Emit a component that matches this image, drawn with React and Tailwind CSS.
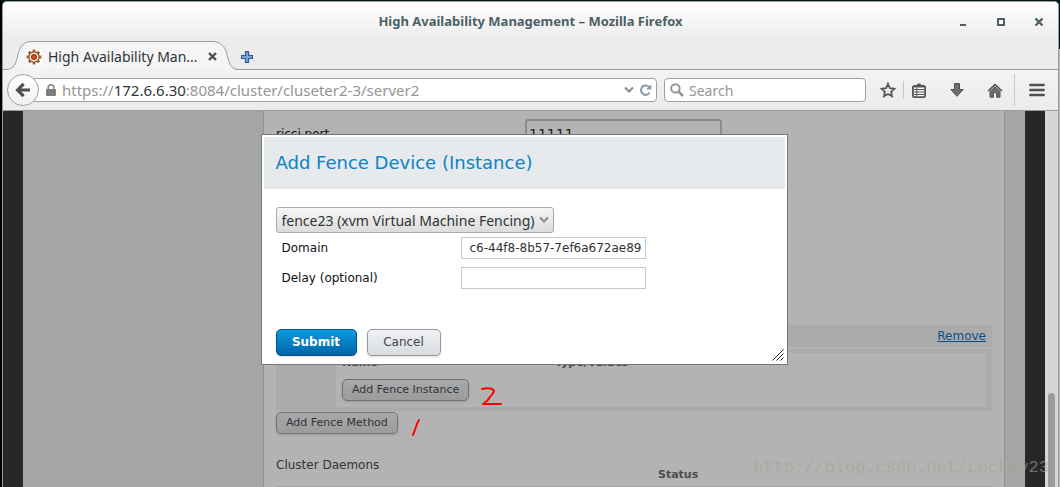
import { useState } from "react"

const DEVICES = ["fence23 (xvm Virtual Machine Fencing)"]

function TitleBar() {
  return (
    <div className="grid h-[39px] grid-cols-[1fr_auto_1fr] items-center">
      <span />
      <h1 className="text-[13px] font-bold text-[#4d5f66]">
        High Availability Management – Mozilla Firefox
      </h1>
      <div className="flex justify-end text-[#4d5f66]">
        <button aria-label="Minimize" className="flex h-6 w-[38px] items-center justify-center">
          <svg width="10" height="10" viewBox="0 0 10 10" fill="currentColor">
            <path d="M2 7h6v2H2z" />
          </svg>
        </button>
        <button aria-label="Maximize" className="flex h-6 w-[38px] items-center justify-center">
          <svg width="10" height="10" viewBox="0 0 10 10" fill="none" stroke="currentColor" strokeWidth="2">
            <path d="M2 2h6v6H2z" />
          </svg>
        </button>
        <button aria-label="Close" className="flex h-6 w-[38px] items-center justify-center">
          <svg width="10" height="10" viewBox="0 0 10 10" fill="none" stroke="currentColor" strokeWidth="2.4">
            <path d="M1.5 1.5l7 7M8.5 1.5l-7 7" />
          </svg>
        </button>
      </div>
    </div>
  )
}

function GearIcon() {
  return (
    <svg width="16" height="16" viewBox="0 0 16 16" className="bg-white">
      <g stroke="#a0602f" strokeWidth="2.8">
        <path d="M8 .6v14.8M.6 8h14.8M2.8 2.8l10.4 10.4M13.2 2.8L2.8 13.2" />
      </g>
      <circle cx="8" cy="8" r="5.2" fill="#f8ece2" stroke="#8a4a22" strokeWidth="1.2" />
      <circle cx="8" cy="8" r="2.4" fill="#e0571b" stroke="#8f3a18" strokeWidth="1.2" />
    </svg>
  )
}

function TabStrip() {
  return (
    <div className="flex h-7 items-center">
      <div className="relative flex h-7 w-[238px] items-center">
        <svg
          width="238"
          height="29"
          viewBox="0 0 238 29"
          className="absolute top-0 left-0"
          fill="#f5f5f5"
          stroke="#9c9c9c"
        >
          <path d="M0 28.5h3c6 0 9-3 11-11l1-4c2-8 5-13 14-13h180c9 0 13 5 15 13l1 4c2 8 5 11 11 11h3" />
          <path d="M6 28.5h226" stroke="#f2f2f2" />
        </svg>
        <div className="relative flex w-full items-center pt-[3px] pr-6 pl-[23px]">
          <GearIcon />
          <span className="ml-[6px] flex-1 text-sm whitespace-nowrap text-[#2e3436]">High Availability Man...</span>
          <button aria-label="Close tab">
            <svg width="9" height="9" viewBox="0 0 9 9" fill="none" stroke="#4a4f50" strokeWidth="2.4">
              <path d="M1 1l7 7M8 1L1 8" />
            </svg>
          </button>
        </div>
      </div>
      <button aria-label="New tab" className="-ml-1 px-1 pt-[3px]">
        <svg width="12" height="12" viewBox="0 0 12 12" fill="#7ea6d8" stroke="#2c5a9e" strokeWidth="1.2">
          <path d="M4.5.6h3v3.9h3.9v3H7.5v3.9h-3V7.5H.6v-3h3.9z" />
        </svg>
      </button>
    </div>
  )
}

function Toolbar() {
  return (
    <div className="flex h-[41px] items-center border-t border-[#9c9c9c] bg-gradient-to-b from-[#f3f3f3] to-[#ebebeb] pl-1">
      <button
        aria-label="Back"
        className="z-10 flex size-8 shrink-0 items-center justify-center rounded-full border border-[#97a5b4] bg-gradient-to-b from-white to-[#f0f0f0]"
      >
        <svg width="16" height="16" viewBox="0 0 16 16" fill="none" stroke="#505050" strokeWidth="3.2">
          <path d="M8.6 1.8L2.6 8l6 6.2M3 8h12" />
        </svg>
      </button>
      <div className="-ml-2 flex h-6 min-w-0 flex-1 items-center rounded-sm border border-[#a0a0a0] bg-white pr-1 pl-[14px]">
        <svg width="10" height="12" viewBox="0 0 10 12" className="shrink-0">
          <path d="M2.2 6V3.6a2.8 2.8 0 015.6 0V6" fill="none" stroke="#868686" strokeWidth="1.6" />
          <rect y="5" width="10" height="7" rx="1" fill="#7d7d7d" />
        </svg>
        <span className="ml-[6px] flex-1 truncate text-[15px] leading-5 text-[#959595]">
          https://<span className="text-[#2e3436]">172.6.6.30</span>:8084/cluster/cluseter2-3/server2
        </span>
        <button aria-label="History" className="p-1">
          <svg width="10" height="8" viewBox="0 0 10 8" fill="none" stroke="#8a8a85" strokeWidth="2">
            <path d="M1 1.5l4 4 4-4" />
          </svg>
        </button>
        <button aria-label="Reload" className="pl-[2px]">
          <svg width="12" height="12" viewBox="0 0 12 12" fill="none" stroke="#8c9bab" strokeWidth="2">
            <path d="M9.6 8.6A4.6 4.6 0 115.8 1.6c1.5 0 2.6.6 3.4 1.6" />
            <path d="M11.4.2v5.3H6z" fill="#8c9bab" stroke="none" />
          </svg>
        </button>
      </div>
      <label className="ml-[7px] flex h-6 w-[202px] items-center rounded-sm border border-[#a0a0a0] bg-white pl-[5px]">
        <svg width="14" height="14" viewBox="0 0 14 14" fill="none" stroke="#949494" className="shrink-0">
          <circle cx="5.4" cy="5.4" r="4.2" strokeWidth="2" />
          <path d="M8.6 8.6l4.4 4.4" strokeWidth="2.6" />
        </svg>
        <input
          aria-label="Search"
          placeholder="Search"
          className="ml-[5px] w-full min-w-0 pt-px text-sm outline-none placeholder:text-[#959595]"
        />
      </label>
      <button aria-label="Bookmark" className="ml-[7px] flex w-[30px] justify-center">
        <svg width="16" height="16" viewBox="0 0 16 16" fill="none" stroke="#555" strokeWidth="1.7">
          <path d="M8 1.8l1.9 4.3 4.6.5-3.4 3.1.9 4.6L8 12l-4 2.3.9-4.6-3.4-3.1 4.6-.5z" />
        </svg>
      </button>
      <span className="h-[18px] w-px bg-[#c6c6c6]" />
      <button aria-label="Bookmarks list" className="mr-1 flex w-[30px] justify-center">
        <svg width="14" height="15" viewBox="0 0 14 15">
          <path d="M4 2.6L6 .6h2l2 2" fill="#555" />
          <rect x=".9" y="2.9" width="12.2" height="11.2" rx="1.4" fill="#fafafa" stroke="#555" strokeWidth="1.8" />
          <path d="M2 6.5h10M2 9h10M2 11.5h10M4.8 4.5v9" stroke="#555" />
          <path d="M2 3.6h10" stroke="#555" strokeWidth="1.6" />
        </svg>
      </button>
      <button aria-label="Downloads" className="flex w-[38px] justify-center">
        <svg width="14" height="14" viewBox="0 0 14 14" fill="#6e6e6e" stroke="#505050">
          <path d="M4.5.5h5v6h3.7L7 13.3.8 6.5h3.7z" />
        </svg>
      </button>
      <button aria-label="Home" className="flex w-[38px] justify-center">
        <svg width="16" height="15" viewBox="0 0 16 15">
          <path d="M3 8.4l5-4.6 5 4.6v5.8H9.6V9.6H6.4v4.6H3z" fill="#6e6e6e" stroke="#505050" />
          <path d="M1 8l7-6.4L15 8" fill="none" stroke="#505050" strokeWidth="1.6" />
        </svg>
      </button>
      <span className="h-8 w-px bg-[#c3cad0]" />
      <button aria-label="Menu" className="flex w-[43px] justify-center">
        <svg width="16" height="14" viewBox="0 0 16 14" stroke="#505050" strokeWidth="2.6" strokeLinecap="round">
          <path d="M1.4 2h13.2M1.4 7h13.2M1.4 12h13.2" />
        </svg>
      </button>
    </div>
  )
}

function GreyButton({ children }) {
  return (
    <button className="block h-[22px] rounded-[5px] border border-[#707274] bg-gradient-to-b from-[#a8a9ab] to-[#9a9b9d] px-[9px] text-[11px] leading-[20px] text-[#333] shadow-sm">
      {children}
    </button>
  )
}

function NodePage() {
  return (
    <div className="flex min-w-0 flex-1 bg-[#a4a5a7] pr-5 pl-60">
      <main className="relative flex-1 overflow-hidden border-x border-[#8f9294] bg-[#b3b3b3] px-3 pt-2">
        <div className="flex items-center">
          <label htmlFor="ricci" className="w-[249px] text-[12px] text-[#111]">
            ricci port
          </label>
          <input
            id="ricci"
            defaultValue="11111"
            className="h-[30px] w-[197px] rounded-[3px] border-2 border-[#8b8b8b] px-[2px] text-[14px] text-[#222]"
          />
        </div>

        <div className="mt-44 flex h-[22px] items-center justify-end bg-[#ababab] pr-[6px]">
          <a href="#remove" className="text-[12px] text-[#07508a] underline">
            Remove
          </a>
        </div>
        <div className="mt-[2px] bg-[#ababab] pt-1 pr-[6px] pb-1 pl-[60px]">
          <div className="bg-[#b3b3b3] px-[6px] pb-[6px]">
            <table className="w-full text-left text-[11px] leading-4 text-[#444]">
              <thead>
                <tr>
                  <th className="w-[213px] pt-[2px] pb-2">Name</th>
                  <th className="pt-[2px] pb-2">Type/Values</th>
                </tr>
              </thead>
            </table>
            <GreyButton>Add Fence Instance</GreyButton>
          </div>
        </div>
        <div className="mt-px">
          <GreyButton>Add Fence Method</GreyButton>
        </div>

        <h2 className="mt-[25px] text-[12px] leading-3 text-[#333]">Cluster Daemons</h2>
        <div className="-mt-[2px] border-b border-[#a3a3a3] pb-[5px] pl-[382px] text-[11px] leading-3 font-bold text-[#4d4d4d]">
          Status
        </div>

        {/* hand-drawn step numbers */}
        <svg
          width="100"
          height="60"
          viewBox="0 0 100 60"
          className="absolute top-[268px] left-[141px]"
          fill="none"
          stroke="#f00"
          strokeWidth="2"
          strokeLinecap="round"
          strokeLinejoin="round"
        >
          <path d="M77 10q10-2 12 2-1 3-4 6-2 4-7 7h18" />
          <path d="M14 41q-2 3-3 7l-3 8" />
        </svg>
      </main>
    </div>
  )
}

function FenceDialog() {
  const [device, setDevice] = useState(DEVICES[0])
  const [domain, setDomain] = useState("c6-44f8-8b57-7ef6a672ae89")
  const [delay, setDelay] = useState("")

  return (
    <form
      role="dialog"
      aria-labelledby="dialog-title"
      onSubmit={(e) => e.preventDefault()}
      className="relative w-[527px] border border-[#777] bg-white p-[2px] pb-2"
    >
      <h2 id="dialog-title" className="bg-[#e6eaed] px-3 pt-3 pb-3 text-lg leading-7 text-[#0c83c4]">
        Add Fence Device (Instance)
      </h2>

      <div className="px-3 pt-[18px]">
        <div className="relative w-[278px]">
          <select
            aria-label="Fence device"
            value={device}
            onChange={(e) => setDevice(e.target.value)}
            className="block h-[26px] w-full appearance-none rounded-[3px] border border-[#aaa] bg-gradient-to-b from-[#f6f6f6] to-[#dcdcdc] pt-[2px] pl-[5px] font-['Noto_Sans',sans-serif] text-sm text-[#2e3436]"
          >
            {DEVICES.map((d) => (
              <option key={d}>{d}</option>
            ))}
          </select>
          <svg
            width="10"
            height="8"
            viewBox="0 0 10 8"
            className="pointer-events-none absolute top-[9px] right-[5px]"
            fill="none"
            stroke="#8a8a85"
            strokeWidth="2"
          >
            <path d="M1 1.5l4 4 4-4" />
          </svg>
        </div>

        <div className="mt-1 space-y-2 pl-[6px] text-[12px] text-[#111]">
          <div className="flex items-center">
            <label htmlFor="domain" className="w-[179px]">
              Domain
            </label>
            <input
              id="domain"
              value={domain}
              onChange={(e) => setDomain(e.target.value)}
              className="h-[22px] w-[185px] border border-[#c3c8cc] px-[3px] text-right text-[#2e3436]"
            />
          </div>
          <div className="flex items-center">
            <label htmlFor="delay" className="w-[179px]">
              Delay (optional)
            </label>
            <input
              id="delay"
              value={delay}
              onChange={(e) => setDelay(e.target.value)}
              className="h-[22px] w-[185px] border border-[#c3c8cc] px-[3px] text-[#2e3436]"
            />
          </div>
        </div>

        <div className="mt-10 flex gap-[10px] text-[12px]">
          <button className="h-[27px] w-[81px] rounded-[5px] border border-[#00528c] bg-gradient-to-b from-[#0d9be0] to-[#0065a6] pb-px font-bold text-white shadow-sm">
            Submit
          </button>
          <button
            type="button"
            className="h-[27px] w-[74px] rounded-[5px] border border-[#999] bg-gradient-to-b from-[#f0f2f5] to-[#d8dce0] pb-px text-[#444] shadow-sm"
          >
            Cancel
          </button>
        </div>
      </div>

      <svg width="12" height="12" viewBox="0 0 12 12" className="absolute right-[3px] bottom-[3px]" stroke="#222">
        <path d="M.5 11.5l11-11M4.5 11.5l7-7M8.5 11.5l3-3" />
      </svg>
    </form>
  )
}

export default function App() {
  return (
    <div className="flex h-screen flex-col overflow-hidden bg-gradient-to-b from-[#04181c] from-10% to-[#bbb] to-10% pt-px font-['Noto_Sans',sans-serif]">
      <div className="flex min-h-0 flex-1 border-l-2 border-black pr-px">
        <div className="flex min-w-0 flex-1 flex-col overflow-hidden rounded-t-[5px] border border-b-0 border-[#999] bg-[#ececec]">
          <header className="border-b border-[#9c9c9c] bg-gradient-to-b from-white to-[#ececec] to-[38px]">
            <TitleBar />
            <TabStrip />
            <Toolbar />
          </header>

          <div className="relative flex min-h-0 flex-1 font-['DejaVu_Sans',sans-serif]">
            <div className="relative flex min-w-0 flex-1 overflow-hidden bg-[#262728] px-5">
              <NodePage />
              <div className="absolute inset-x-0 top-[23px] flex justify-center">
                <FenceDialog />
              </div>
            </div>
            <div className="flex w-[13px] flex-col justify-end bg-[#d6d6d6] px-[3px]">
              <div className="h-1/4 rounded-t-full bg-[#999b9d]" />
            </div>
            <span className="absolute right-[9px] bottom-[7px] font-['Liberation_Mono',monospace] text-[17px] leading-6 text-[#a4a590]/60">
              http://blog.csdn.net/Lockey23
            </span>
          </div>
        </div>
      </div>
    </div>
  )
}
